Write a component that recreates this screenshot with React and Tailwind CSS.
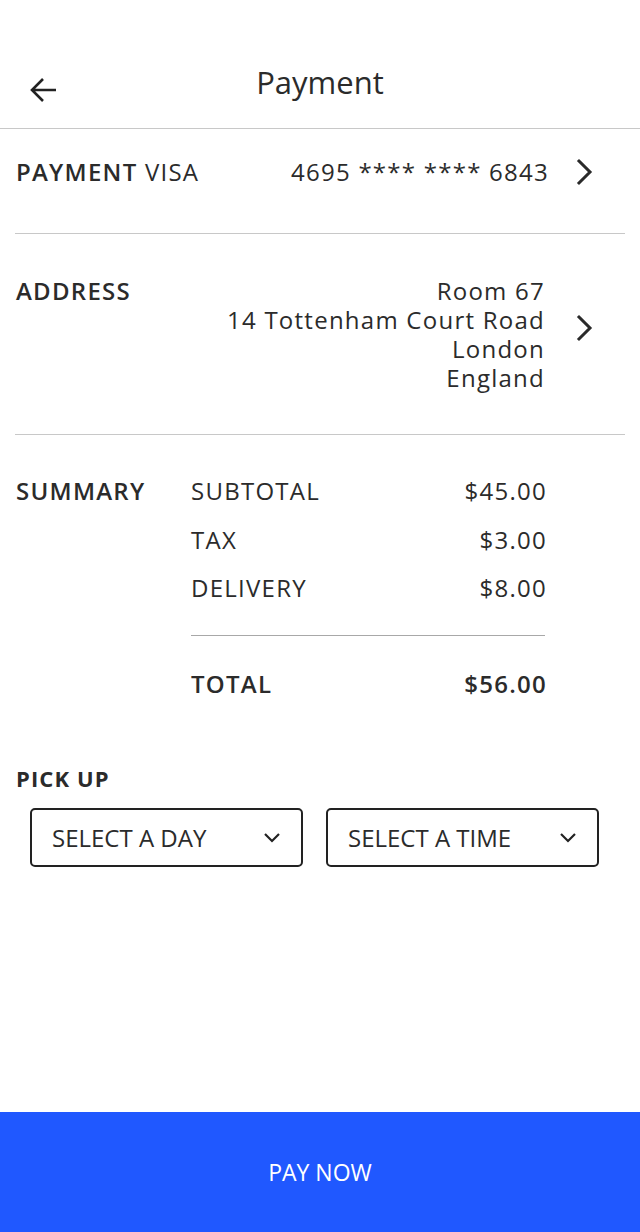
import React from "react";

const Chevron = () => (
  <svg width="20" height="28" viewBox="0 0 20 28" fill="none">
    <path d="M4 3 L15 14 L4 25" stroke="#2a2a2a" strokeWidth="3" strokeLinecap="square" strokeLinejoin="miter" />
  </svg>
);

const Down = () => (
  <svg width="18" height="12" viewBox="0 0 18 12" fill="none">
    <path d="M2 2 L9 9 L16 2" stroke="#222" strokeWidth="2.2" />
  </svg>
);

export default function App() {
  return (
    <div className="w-[640px] h-[1232px] bg-white flex flex-col text-[#2b2b2b]" style={{ fontFamily: '"Open Sans", sans-serif' }}>
      <header className="h-[129px] border-b border-[#c8c8c8] flex items-end pb-[26px] relative">
        <div className="w-full text-center text-[31px] leading-[40px]">Payment</div>
        <div className="absolute left-[28px] top-[76px]">
          <svg width="30" height="28" viewBox="0 0 30 28" fill="none">
            <path d="M28 14 H4 M15 3 L4 14 L15 25" stroke="#222" strokeWidth="2.6" />
          </svg>
        </div>
      </header>

      <div className="px-[15px]">
        <div className="h-[105px] border-b border-[#c8c8c8] flex items-start pt-[28px] pl-[1px] pr-[30px] text-[24px] leading-[30px] tracking-[1.25px]">
          <span className="font-semibold">PAYMENT</span>
          <span>&nbsp;VISA</span>
          <span className="ml-auto">4695 **** **** 6843</span>
          <span className="ml-[26px] mt-[1px]"><Chevron /></span>
        </div>

        <div className="h-[201px] border-b border-[#c8c8c8] flex pl-[1px] pr-[30px] pt-[42px] text-[24px] tracking-[1.25px]">
          <span className="font-semibold leading-[29px]">ADDRESS</span>
          <div className="ml-auto text-right leading-[29px] mr-[2px]">
            <div>Room 67</div>
            <div>14 Tottenham Court Road</div>
            <div>London</div>
            <div>England</div>
          </div>
          <span className="ml-[28px] mt-[38px]"><Chevron /></span>
        </div>

        <div className="flex pl-[1px] pt-[41px] text-[24px] tracking-[1.25px]">
          <div className="w-[175px] font-semibold leading-[29px]">SUMMARY</div>
          <div className="w-[355px] flex flex-col">
            <div className="flex justify-between leading-[29px]"><span>SUBTOTAL</span><span className="mr-[-1px]">$45.00</span></div>
            <div className="flex justify-between leading-[29px] mt-[20px]"><span>TAX</span><span className="mr-[-1px]">$3.00</span></div>
            <div className="flex justify-between leading-[29px] mt-[19px]"><span>DELIVERY</span><span className="mr-[-1px]">$8.00</span></div>
            <div className="h-px bg-[#a8a8a8] mt-[33px] w-[354px]" />
            <div className="flex justify-between leading-[29px] mt-[33px] font-semibold"><span>TOTAL</span><span className="mr-[-1px]">$56.00</span></div>
          </div>
        </div>

        <div className="mt-[66px] pl-[1px] text-[22px] font-bold leading-[29px] tracking-[1.1px]">PICK UP</div>
        <div className="flex gap-[23px] pl-[15px] mt-[15px]">
          {["SELECT A DAY", "SELECT A TIME"].map((t) => (
            <div key={t} className="w-[273px] h-[59px] border-2 border-[#222] rounded-[5px] flex items-center pl-[20px] pr-[20px] text-[24px]">
              <span>{t}</span>
              <span className="ml-auto"><Down /></span>
            </div>
          ))}
        </div>
      </div>

      <div className="mt-auto h-[120px] bg-[#2058ff] flex items-center justify-center text-white text-[23px]">
        PAY NOW
      </div>
    </div>
  );
}
